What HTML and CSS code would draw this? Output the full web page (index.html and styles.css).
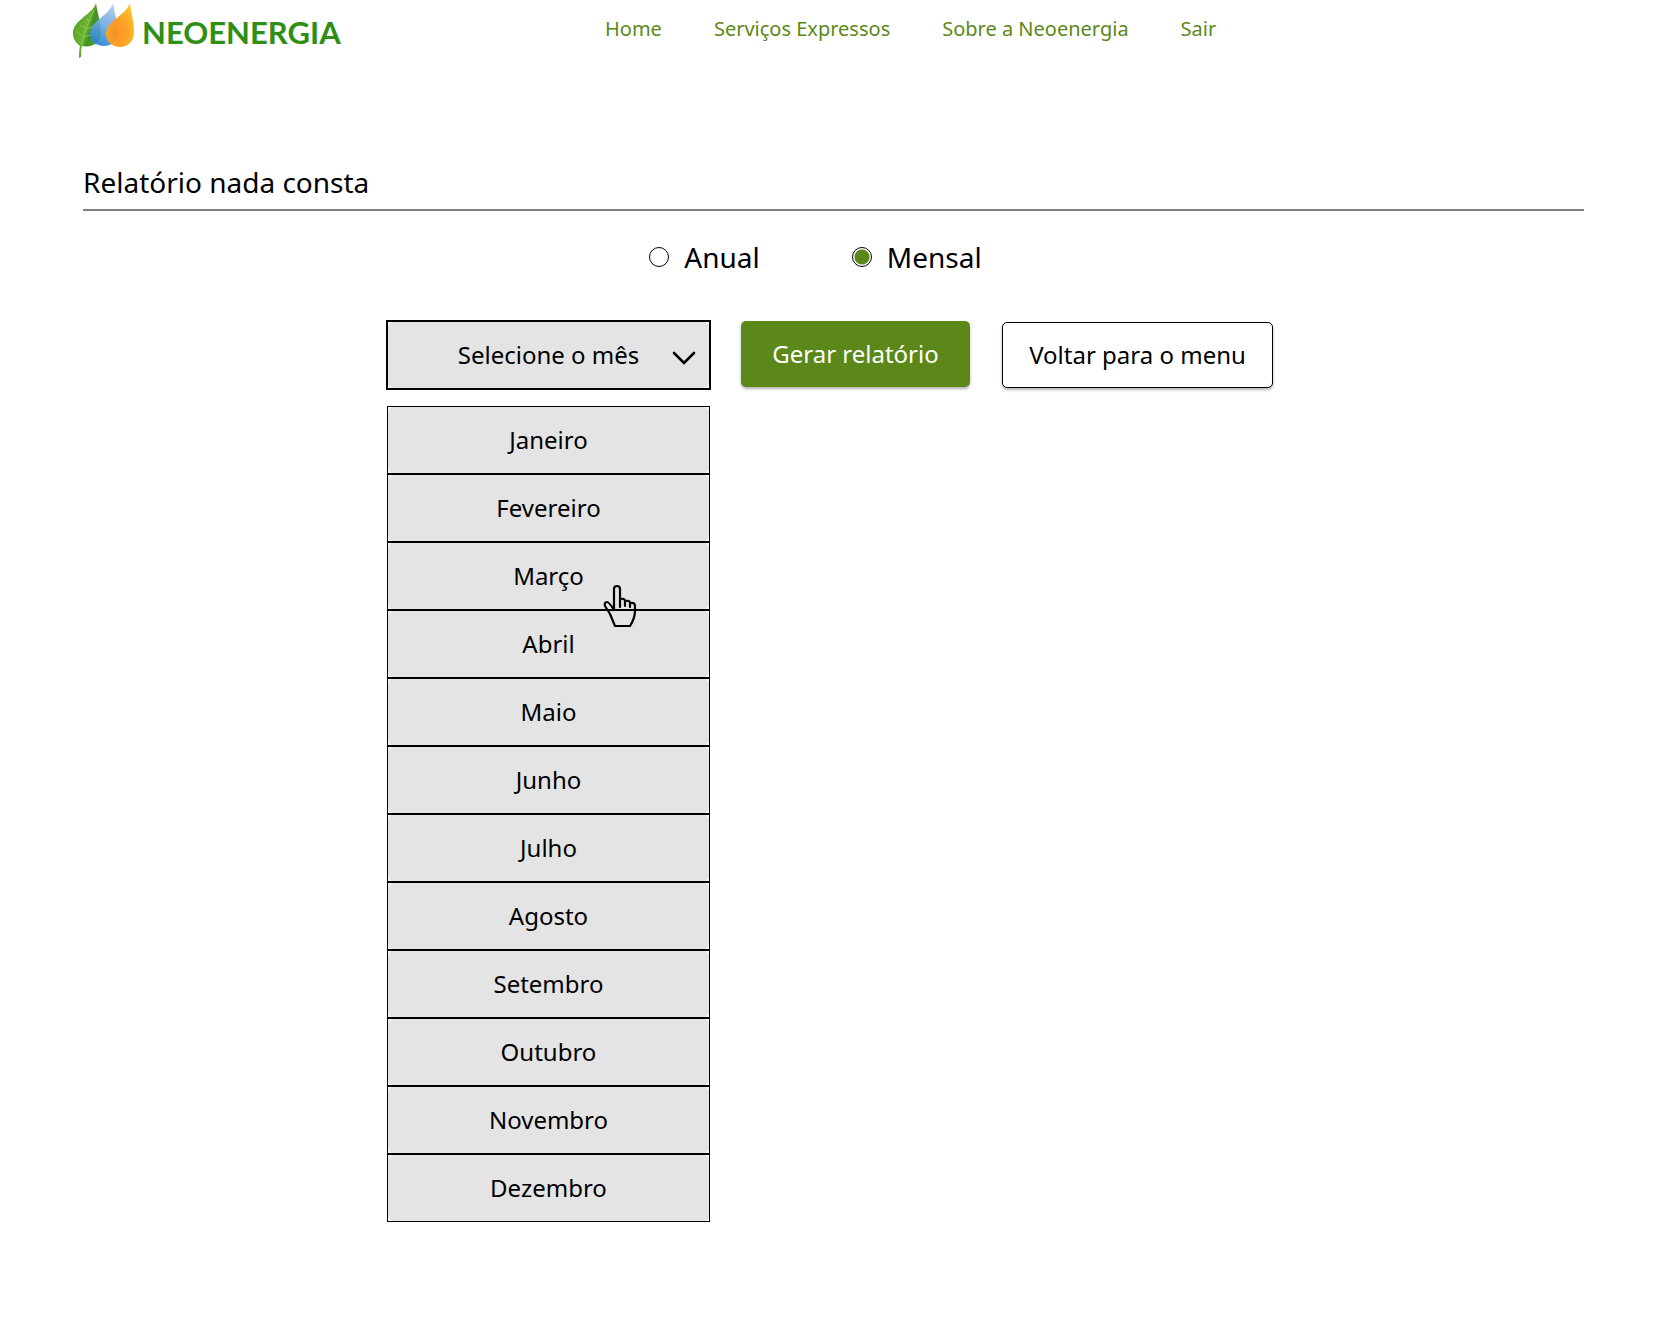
FILE: index.html
```html
<!DOCTYPE html>
<html lang="pt-BR">
<head>
<meta charset="utf-8">
<meta name="viewport" content="width=device-width, initial-scale=1">
<title>Neoenergia - Relatório nada consta</title>
<link rel="stylesheet" href="styles.css">
</head>
<body>
<header class="header">
  <a class="brand" href="#">
    <svg class="brand-mark" viewBox="0 0 62 60" aria-hidden="true">
      <defs>
        <linearGradient id="leaf" x1="0" y1="0.2" x2="1" y2="0.8"><stop offset="0" stop-color="#4c9c25"/><stop offset="0.45" stop-color="#6db52c"/><stop offset="0.6" stop-color="#3f9026"/><stop offset="1" stop-color="#63ad35"/></linearGradient>
        <linearGradient id="drop" x1="0.6" y1="0" x2="0.4" y2="1"><stop offset="0" stop-color="#a9c8ec"/><stop offset="0.5" stop-color="#6aa5e0"/><stop offset="1" stop-color="#1f7fd6"/></linearGradient>
        <radialGradient id="flame" cx="0.45" cy="0.68" r="0.65"><stop offset="0" stop-color="#ff8a1c"/><stop offset="0.5" stop-color="#ff9d16"/><stop offset="1" stop-color="#fdbb16"/></radialGradient>
      </defs>
      <path fill="url(#leaf)" d="M24 3C21 14 1 20 1 33C1 39 4 43 8 46C7 50 7 54 7 58L9 57C9 53 9 49 10 46C20 48 29 43 29 33C29 22 26 16 24 3Z"/>
      <path fill="none" stroke="#9ccb62" stroke-width="0.8" d="M10 45C12 33 17 21 22 10M12 37L4 31M12 37L22 34M15 29L8 25M15 29L22 26M18 21L14 19"/>
      <path fill="url(#drop)" fill-opacity="0.88" d="M41 3C38 15 18 21 18 34C18 41 24 46 32 46C40 46 46 41 46 33C46 22 43 16 41 3Z"/>
      <path fill="url(#flame)" fill-opacity="0.93" d="M58 3C54 15 34 21 34 34C34 41 40 47 48 47C56 47 62 41 62 32C62 20 59 14 58 3Z"/>
    </svg>
    <span class="brand-name">NEOENERGIA</span>
  </a>
  <nav class="nav">
    <a href="#">Home</a>
    <a href="#">Serviços Expressos</a>
    <a href="#">Sobre a Neoenergia</a>
    <a href="#">Sair</a>
  </nav>
</header>
<main class="main">
  <h1 class="title">Relatório nada consta</h1>
  <form class="report">
    <div class="period">
      <label class="choice"><input type="radio" name="periodo" value="anual">Anual</label>
      <label class="choice"><input type="radio" name="periodo" value="mensal" checked>Mensal</label>
    </div>
    <div class="actions">
      <div class="picker">
        <div class="select-box">
          <select class="select" aria-label="Mês"><option>Selecione o mês</option></select>
          <svg class="chevron" viewBox="0 0 24 16" aria-hidden="true"><path d="M2 3L12 13L22 3"/></svg>
        </div>
        <ul class="months">
          <li><button type="button">Janeiro</button></li>
          <li><button type="button">Fevereiro</button></li>
          <li><button type="button">Março</button>
            <svg class="pointer" viewBox="0 0 34 44" aria-hidden="true"><path d="M11 26V5Q11 2 14 2Q17 2 17 5V23M17 15Q22 14 22 17V22M22 17Q27 16 27 19V23M27 19Q32 18 32 22V27Q32 34 27 42H12L7 30L2 22Q1 18 4 18Q6 18 11 26"/></svg>
          </li>
          <li><button type="button">Abril</button></li>
          <li><button type="button">Maio</button></li>
          <li><button type="button">Junho</button></li>
          <li><button type="button">Julho</button></li>
          <li><button type="button">Agosto</button></li>
          <li><button type="button">Setembro</button></li>
          <li><button type="button">Outubro</button></li>
          <li><button type="button">Novembro</button></li>
          <li><button type="button">Dezembro</button></li>
        </ul>
      </div>
      <button class="btn btn-primary" type="submit">Gerar relatório</button>
      <button class="btn btn-outline" type="button">Voltar para o menu</button>
    </div>
  </form>
</main>
</body>
</html>
```
FILE: styles.css
```css
* { box-sizing: border-box; }

body {
  margin: 0;
  background: #fff;
  color: #000;
  font-family: "Trebuchet MS", "Noto Sans", sans-serif;
}

button, select { font: inherit; color: inherit; }

.header {
  display: flex;
  align-items: flex-start;
  padding-left: 72px;
}

.brand {
  display: flex;
  gap: 8px;
  width: 270px;
  text-decoration: none;
}

.brand-mark { width: 62px; height: 60px; }

.brand-name {
  padding-top: 12px;
  color: #2f8f14;
  font-family: Lato, sans-serif;
  font-size: 31px;
  font-weight: 700;
  line-height: 40px;
}

.nav {
  display: flex;
  gap: 52px;
  margin-left: 263px;
  padding-top: 16px;
  font-size: 20px;
  line-height: 26px;
}

.nav a {
  color: #5c8819;
  text-decoration: none;
  white-space: nowrap;
}

.main { padding: 101px 96px 120px 83px; }

.title {
  margin: 0;
  padding-bottom: 6px;
  border-bottom: 2px solid #808080;
  font-size: 28px;
  font-weight: 400;
  line-height: 42px;
}

.period {
  display: flex;
  justify-content: center;
  gap: 92px;
  padding: 26px 36px 0 0;
}

.choice {
  display: flex;
  align-items: center;
  gap: 15px;
  font-size: 28px;
  line-height: 40px;
}

.choice input {
  appearance: none;
  width: 20px;
  height: 20px;
  margin: 0;
  border: 1px solid #000;
  border-radius: 50%;
  background: #fff;
}

.choice input:checked {
  background: radial-gradient(circle, #5c8819 7px, #fff 8px);
}

.actions {
  display: flex;
  justify-content: center;
  align-items: flex-start;
  padding: 43px 8px 0 0;
  font-size: 24px;
  line-height: 32px;
}

.picker {
  width: 325px;
  margin-right: 30px;
}

.select-box {
  position: relative;
  border: 2px solid #000;
}

.select {
  display: block;
  appearance: none;
  width: 100%;
  height: 66px;
  padding: 0;
  border: 0;
  border-radius: 5px;
  background: #e4e4e4;
  text-align: center;
  text-align-last: center;
}

.chevron {
  position: absolute;
  right: 13px;
  top: 28px;
  width: 24px;
  height: 16px;
  fill: none;
  stroke: #000;
  stroke-width: 2.6;
  stroke-linecap: round;
  pointer-events: none;
}

.months {
  margin: 16px 1px 0;
  padding: 0;
  list-style: none;
}

.months li {
  position: relative;
  border: 1px solid #000;
}

.months button {
  display: block;
  width: 100%;
  height: 66px;
  padding: 0;
  border: 0;
  border-radius: 5px;
  background: #e4e4e4;
}

.pointer {
  position: absolute;
  z-index: 1;
  left: 215px;
  top: 41px;
  width: 34px;
  height: 44px;
  fill: none;
  stroke: #000;
  stroke-width: 2.2;
  stroke-linecap: round;
  stroke-linejoin: round;
}

.btn {
  height: 66px;
  margin-top: 1px;
  border: 0;
  border-radius: 5px;
  box-shadow: 0 2px 3px rgba(0, 0, 0, 0.3);
  white-space: nowrap;
}

.btn-primary {
  width: 229px;
  margin-right: 32px;
  background: #5c8819;
  color: #fff;
}

.btn-outline {
  width: 271px;
  margin-top: 2px;
  border: 1px solid #000;
  background: #fff;
}
```
